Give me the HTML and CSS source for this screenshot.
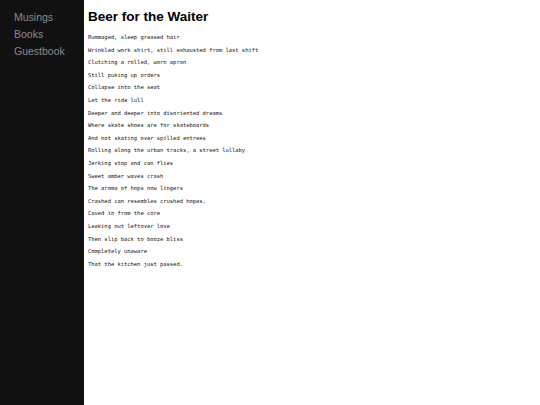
FILE: index.html
```html
<!DOCTYPE html>
<html>
<head>
<meta charset="utf-8">
<link rel="stylesheet" href="styles.css">
</head>
<body>
<div class="layout">
  <nav class="sidebar">
    <a class="nav-link" href="#">Musings</a>
    <a class="nav-link" href="#">Books</a>
    <a class="nav-link" href="#">Guestbook</a>
  </nav>
  <main class="content">
    <h1 class="title">Beer for the Waiter</h1>
    <div class="poem">
      <p>Rummaged, sleep greased hair</p>
      <p>Wrinkled work shirt, still exhausted from last shift</p>
      <p>Clutching a rolled, worn apron</p>
      <p>Still puking up orders</p>
      <p>Collapse into the seat</p>
      <p>Let the ride lull</p>
      <p>Deeper and deeper into disoriented dreams</p>
      <p>Where skate shoes are for skateboards</p>
      <p>And not skating over spilled entrees</p>
      <p>Rolling along the urban tracks, a street lullaby</p>
      <p>Jerking stop and can flies</p>
      <p>Sweet amber waves crash</p>
      <p>The aroma of hops now lingers</p>
      <p>Crashed can resembles crushed hopes.</p>
      <p>Caved in from the core</p>
      <p>Leaking out leftover love</p>
      <p>Then slip back to booze bliss</p>
      <p>Completely unaware</p>
      <p>That the kitchen just passed.</p>
    </div>
  </main>
</div>
</body>
</html>
```
FILE: styles.css
```css
html, body {
  margin: 0;
  padding: 0;
  height: 100%;
  background: #fff;
}
.layout {
  display: flex;
  min-height: 405px;
}
.sidebar {
  width: 84px;
  flex: none;
  background: #111;
  display: flex;
  flex-direction: column;
  padding: 9px 0 0 14px;
  box-sizing: border-box;
}
.nav-link {
  font-family: "Liberation Sans", Arial, sans-serif;
  font-size: 10.5px;
  line-height: 17px;
  color: #8a8a8a;
  text-decoration: none;
}
.content {
  flex: 1;
  padding: 0 0 0 4px;
}
.title {
  font-family: "Liberation Sans", Arial, sans-serif;
  font-weight: bold;
  font-size: 13.5px;
  line-height: 16px;
  margin: 9px 0 9px;
  color: #000;
}
.poem p {
  font-family: "DejaVu Sans Mono", monospace;
  font-size: 5.45px;
  line-height: 6.6px;
  margin: 0 0 6px;
  color: #111;
}
```
